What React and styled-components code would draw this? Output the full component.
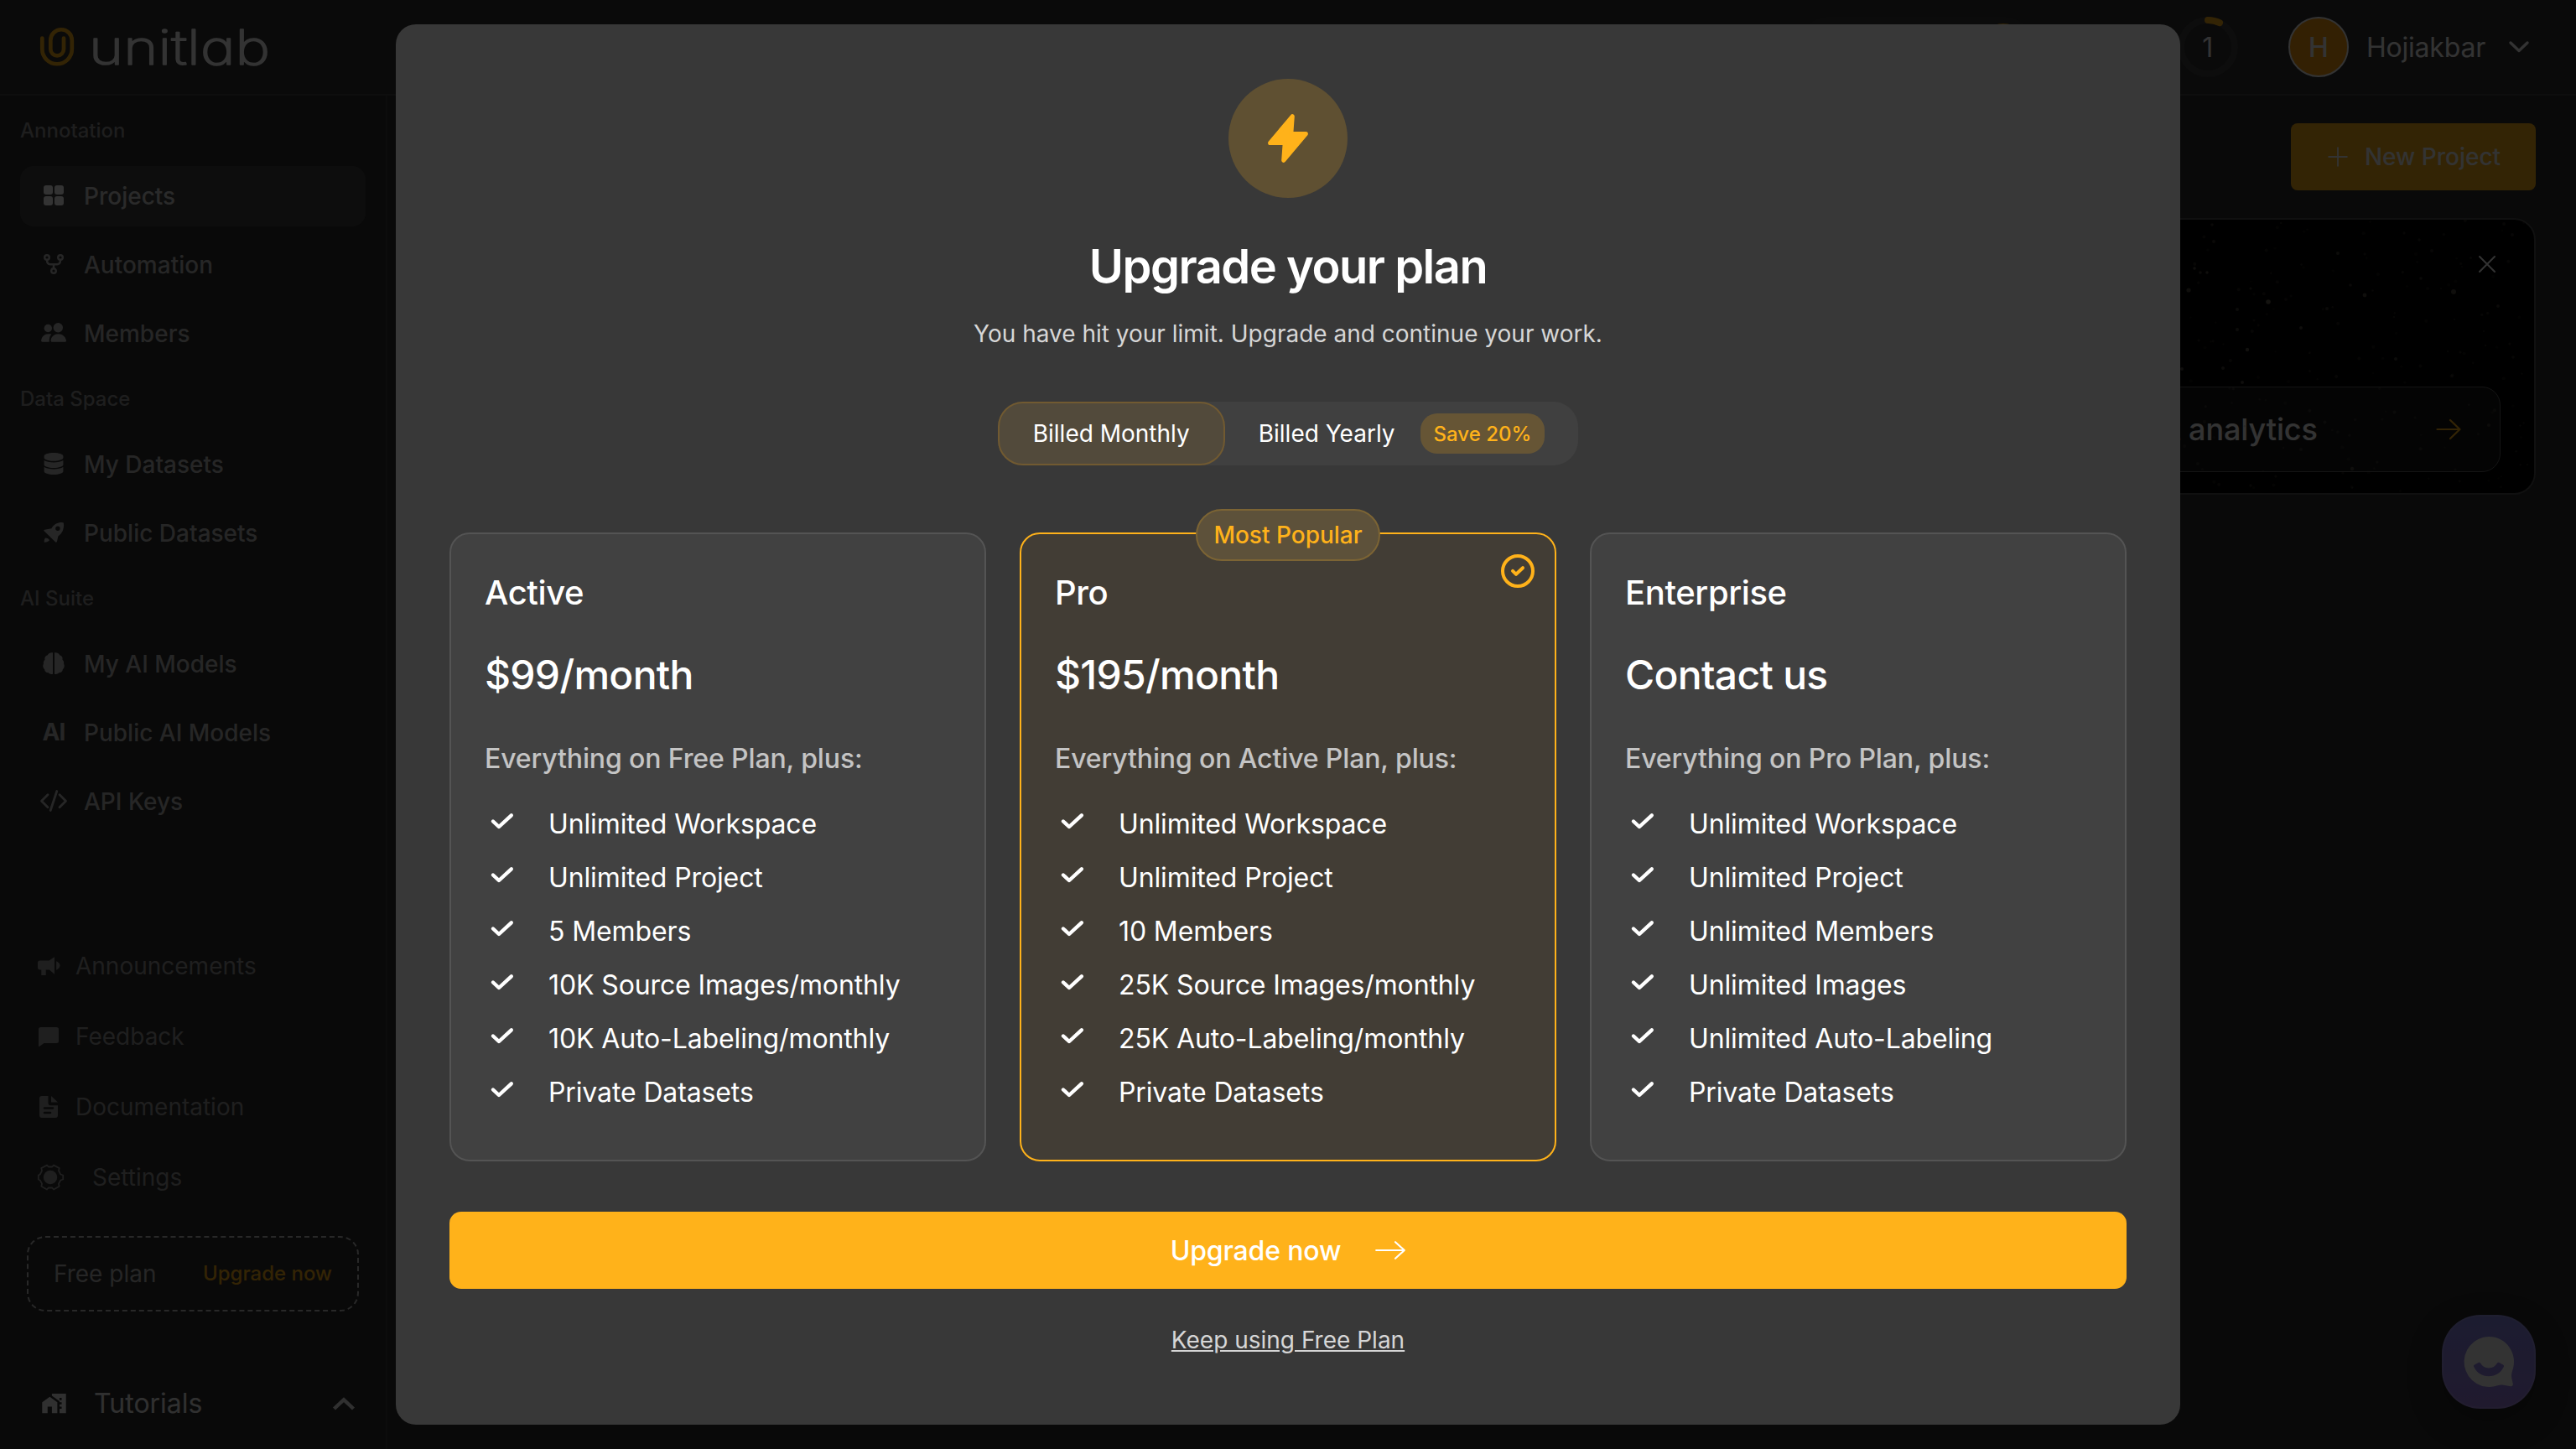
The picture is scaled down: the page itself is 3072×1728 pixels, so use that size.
import styled, { createGlobalStyle, css } from 'styled-components'
import { FaDatabase } from 'react-icons/fa'
import { MdHomeWork } from 'react-icons/md'

const GlobalStyle = createGlobalStyle`
    * {
        box-sizing: border-box;
    }

    body {
        margin: 0;
        background: #2d2d2d;
        font-family: 'Inter', sans-serif;
        overflow: hidden;
    }

    h2, h3, p, ul {
        margin: 0;
        padding: 0;
        font-weight: inherit;
    }

    ul {
        list-style: none;
    }

    button {
        font-family: inherit;
        border: none;
        padding: 0;
    }

    svg {
        display: block;
        flex-shrink: 0;
        overflow: visible;
    }
`

const Page = styled.div`
    width: 3072px;
    height: 1728px;
    display: flex;
    flex-direction: column;
    background: #2d2d2d;
    color: #fff;
`

/* ---------- header ---------- */

const Header = styled.header`
    height: 114px;
    flex-shrink: 0;
    display: flex;
    align-items: center;
    justify-content: space-between;
    padding: 0 56px 0 48px;
    background: #323232;
    border-bottom: 2px solid #464646;
`

const HeaderRight = styled.div`
    display: flex;
    align-items: center;
`

const UsagePill = styled.div`
    width: 280px;
    height: 72px;
    padding: 8px;
    display: flex;
    justify-content: flex-end;
    border-radius: 36px;
    background: #3a3a3a;
    margin-right: 172px;
`

const PillDot = styled.span`
    width: 56px;
    height: 56px;
    border-radius: 50%;
    background: #ffb21a;
`

const Ring = styled.div`
    width: 72px;
    height: 72px;
    display: grid;
    place-items: center;
    font-size: 32px;
    margin-right: 60px;

    > * {
        grid-area: 1 / 1;
    }
`

const Avatar = styled.div`
    width: 72px;
    height: 72px;
    display: flex;
    align-items: center;
    justify-content: center;
    border: 2px solid #fff;
    border-radius: 50%;
    background: #ffa00f;
    font-size: 32px;
    font-weight: 500;
`

const UserName = styled.span`
    font-size: 32px;
    letter-spacing: -0.2px;
    margin: 0 28px 0 21px;
`

/* ---------- sidebar ---------- */

const Body = styled.div`
    flex: 1;
    min-height: 0;
    display: flex;
`

const Sidebar = styled.aside`
    width: 462px;
    flex-shrink: 0;
    display: flex;
    flex-direction: column;
    padding-top: 27px;
    border-right: 2px solid #3c3c3c;
`

const Group = styled.div`
    padding: 0 24px;
    margin-bottom: 27px;
`

const GroupLabel = styled.p`
    height: 30px;
    line-height: 30px;
    margin-bottom: 27px;
    font-size: 24px;
    font-weight: 500;
    color: #969696;
`

const GroupItems = styled.div`
    display: flex;
    flex-direction: column;
    gap: 10px;
`

const NavItem = styled.a`
    height: 72px;
    display: flex;
    align-items: center;
    gap: 20px;
    padding-left: 24px;
    border-radius: 16px;
    font-size: 28px;
    font-weight: 500;
    color: ${(props) => (props.$active ? '#d2d2d2' : '#bebebe')};
    background: ${(props) => (props.$active ? '#434343' : 'transparent')};

    svg {
        color: ${(props) => (props.$active ? '#fff' : '#bebebe')};
    }
`

const NavIcon = styled.span`
    width: 32px;
    height: 32px;
    display: flex;
    align-items: center;
    justify-content: center;
    margin-bottom: 2px;
`

const AiMark = styled.span`
    font-size: 28px;
    font-weight: 700;
    letter-spacing: -1px;
`

const FooterNav = styled.div`
    margin-top: auto;
    padding-left: 44px;
`

const FooterItem = styled.a`
    height: 84px;
    display: flex;
    align-items: center;
    gap: ${(props) => (props.$wide ? '34px' : '18px')};
    font-size: 28px;
    color: #9b9b9b;
`

const FooterIcon = styled.span`
    width: ${(props) => (props.$wide ? '32px' : '28px')};
    display: flex;
    justify-content: center;
`

const PlanBox = styled.div`
    height: 90px;
    margin: 28px 32px 55px;
    display: flex;
    align-items: center;
    justify-content: space-between;
    padding: 0 30px;
    border: 2px dashed #c8c8c8;
    border-radius: 22px;
    font-size: 28px;
    color: #bebebe;

    b {
        font-size: 24px;
        font-weight: 500;
        color: #ffb21a;
        padding-bottom: 2px;
    }
`

const Tutorials = styled.div`
    height: 109px;
    flex-shrink: 0;
    display: flex;
    align-items: center;
    padding: 0 37px 0 49px;
    font-size: 32px;
    color: #f0f0f0;

    span {
        flex: 1;
        margin-left: 32px;
    }
`

/* ---------- main area ---------- */

const Main = styled.main`
    flex: 1;
    display: flex;
    flex-direction: column;
    align-items: flex-end;
    padding: 33px 48px 48px 32px;
`

const NewProject = styled.button`
    width: 292px;
    height: 80px;
    flex-shrink: 0;
    display: flex;
    align-items: center;
    justify-content: center;
    gap: 20px;
    padding-left: 2px;
    border-radius: 8px;
    background: #ffb21a;
    color: #fff;
    font-size: 28px;
    font-weight: 500;
`

const Banner = styled.section`
    position: relative;
    width: 100%;
    height: 330px;
    margin-top: 33px;
    display: flex;
    flex-direction: column;
    align-items: flex-end;
    justify-content: space-between;
    padding: 43px 40px 25px;
    border: 2px solid #505050;
    border-radius: 26px;
    background: #000;
    overflow: hidden;
`

const Stars = styled.svg`
    position: absolute;
    top: 0;
    right: 0;
`

const BannerCard = styled.div`
    width: 640px;
    height: 102px;
    display: flex;
    align-items: center;
    justify-content: space-between;
    padding: 0 46px 0 137px;
    border: 1px solid #646464;
    border-radius: 22px;
    background: rgba(255, 255, 255, 0.09);
    font-size: 36px;
    font-weight: 500;
    letter-spacing: -0.1px;
`

const CloseIcon = styled.svg`
    margin-right: 6px;
`

const Chat = styled.button`
    width: 112px;
    height: 112px;
    margin-top: auto;
    border-radius: 46px;
    border: 2px solid rgba(255, 255, 255, 0.12);
    background: linear-gradient(#8c8cf0, #a082e6) border-box;
    box-shadow: 0 14px 40px rgba(0, 0, 0, 0.25);
`

/* ---------- modal ---------- */

const Backdrop = styled.div`
    position: fixed;
    inset: 0;
    display: flex;
    align-items: center;
    justify-content: center;
    background: rgba(0, 0, 0, 0.8);
`

const Modal = styled.div`
    width: 2128px;
    height: 1670px;
    display: flex;
    flex-direction: column;
    align-items: center;
    padding: 65px 64px;
    border-radius: 24px;
    background: #383838;
    color: #fff;
`

const BoltCircle = styled.div`
    width: 142px;
    height: 142px;
    flex-shrink: 0;
    display: flex;
    align-items: center;
    justify-content: center;
    border-radius: 50%;
    background: #5f5032;
`

const Title = styled.h2`
    margin-top: 50px;
    font-size: 56px;
    line-height: 64px;
    font-weight: 600;
    letter-spacing: -1.5px;
`

const Subtitle = styled.p`
    margin-top: 28px;
    font-size: 28px;
    line-height: 40px;
    color: #d6d6d6;
`

const Toggle = styled.div`
    margin-top: 61px;
    height: 76px;
    flex-shrink: 0;
    display: flex;
    border-radius: 30px;
    background: #404040;
`

const ToggleOption = styled.button`
    height: 76px;
    display: flex;
    align-items: center;
    gap: 30px;
    padding: 0 40px;
    border-radius: 30px;
    background: transparent;
    color: #fff;
    font-size: 28px;

    ${(props) =>
        props.$active &&
        css`
            border: 2px solid #715a31;
            background: #524a3b;
        `}
`

const SaveTag = styled.span`
    height: 48px;
    display: flex;
    align-items: center;
    padding: 0 16px;
    border-radius: 20px;
    background: #665535;
    color: #ffb21a;
    font-size: 24px;
    font-weight: 500;
`

const Plans = styled.div`
    width: 100%;
    margin-top: 80px;
    display: grid;
    grid-template-columns: repeat(3, 640px);
    gap: 40px;
`

const PlanCard = styled.div`
    position: relative;
    height: 750px;
    padding: 46px 40px 0;
    border: 2px solid ${(props) => (props.$highlight ? '#ffb21a' : '#545454')};
    border-radius: 24px;
    background: ${(props) => (props.$highlight ? '#423d35' : '#414141')};
`

const PopularTag = styled.div`
    position: absolute;
    top: -30px;
    left: 50%;
    transform: translateX(-50%);
    width: 220px;
    height: 62px;
    display: flex;
    align-items: center;
    justify-content: center;
    border: 2px solid #7c6434;
    border-radius: 31px;
    background: #5d513a;
    color: #ffb21a;
    font-size: 28px;
    font-weight: 500;
    white-space: nowrap;
`

const SelectedIcon = styled.svg`
    position: absolute;
    top: 24px;
    right: 24px;
`

const PlanName = styled.h3`
    font-size: 40px;
    line-height: 48px;
    font-weight: 500;
    letter-spacing: -0.4px;
`

const Price = styled.p`
    margin-top: 45px;
    font-size: 48px;
    line-height: 58px;
    font-weight: 500;
    letter-spacing: -0.7px;
`

const Includes = styled.p`
    margin-top: 51px;
    font-size: 32px;
    line-height: 40px;
    font-weight: 500;
    letter-spacing: -0.13px;
    color: #c4c4c4;
`

const Features = styled.ul`
    margin-top: 25px;
`

const Feature = styled.li`
    height: 64px;
    display: flex;
    align-items: center;
    gap: 41px;
    padding-left: 7px;
    font-size: 32px;
    letter-spacing: -0.12px;

    svg {
        margin-bottom: 6px;
    }
`

const UpgradeButton = styled.button`
    width: 100%;
    height: 92px;
    flex-shrink: 0;
    margin-top: 60px;
    display: flex;
    align-items: center;
    justify-content: center;
    gap: 41px;
    border-radius: 14px;
    background: #ffb21a;
    color: #fff;
    font-size: 32px;
    font-weight: 500;
    letter-spacing: -0.15px;
`

const KeepLink = styled.a`
    margin-top: 41px;
    font-size: 28px;
    line-height: 40px;
    color: #d6d6d6;
    text-decoration: underline;
`

/* ---------- icons ---------- */

const Logo = () => (
    <svg width='272' height='56' viewBox='0 0 272 56' fill='none'>
        <path
            d='M2.3 17.5V30.5a17.75 17.75 0 0 0 35.5 0V20a12.75 12.75 0 0 0-25.5 0V30.5a7.85 7.85 0 0 0 15.7 0V17.5'
            stroke='#ffb21a'
            strokeWidth='4.7'
            strokeLinecap='round'
        />
        <text
            x='58'
            y='49'
            fill='#fff'
            stroke='#fff'
            strokeWidth='1.600'
            strokeLinejoin='round'
            fontSize='57'
            fontWeight='200'
            textLength='216'
            lengthAdjust='spacingAndGlyphs'
            fontFamily='Inter, sans-serif'
            style={{ fontFeatureSettings: '"cv11"' }}
        >
            unitlab
        </text>
    </svg>
)

const ProjectsIcon = () => (
    <svg width='24' height='24' viewBox='0 0 24 24' fill='currentColor'>
        <rect width='11' height='11' rx='3' />
        <rect x='13' width='11' height='11' rx='3' />
        <rect y='13' width='11' height='11' rx='3' />
        <rect x='13' y='13' width='11' height='11' rx='3' />
    </svg>
)

const AutomationIcon = () => (
    <svg
        width='24'
        height='24'
        viewBox='0 0 24 24'
        fill='none'
        stroke='currentColor'
        strokeWidth='2.4'
    >
        <circle cx='4' cy='4' r='2.8' />
        <circle cx='20' cy='4' r='2.8' />
        <circle cx='12' cy='20' r='2.8' />
        <path d='M4 7c0 4 1.500 5.200 4 5.200h8c2.500 0 4-1.200 4-5.200M12 12v5.500' />
    </svg>
)

const MembersIcon = () => (
    <svg width='30' height='24' viewBox='0 0 30 24' fill='currentColor'>
        <circle cx='8.300' cy='6.500' r='4.700' />
        <circle cx='20.300' cy='5.700' r='5.700' />
        <path d='M12.500 13.600C10.500 15.500 9.700 18 9.700 22.800H1.500C.5 22.800 0 22 .2 20.800.8 16.500 4 13.300 8.500 13.300c1.500 0 2.800 0 4 .3z' />
        <path d='M20.500 13.300c5 0 8.600 3.300 9.400 7.400.3 1.300-.4 2.100-1.500 2.100H13.100c-1.100 0-1.700-.8-1.500-2.100.6-4.100 4-7.400 8.900-7.400z' />
    </svg>
)

const RocketIcon = () => (
    <svg width='24' height='24' viewBox='0 0 24 24' fill='currentColor'>
        <path
            fillRule='evenodd'
            d='M22.900.2C17.500-.4 12.500 2 9.300 7.200L1.200 8.700c-.9.200-1.200.9-.6 1.500l13.600 13.300c.6.6 1.500.3 1.700-.5l1.500-6.600C22.500 13 24.500 7.800 24 1.300c0-.7-.4-1-1.100-1.100zM16.900 4.600a2.700 2.700 0 1 1 0 5.400 2.700 2.700 0 0 1 0-5.400z'
        />
        <path d='M2 18.600c1.800-.2 4.200 1 5 2.600-1.400 1.700-3.300 2.400-5.400 2.600-.7 0-.9-.3-.9-.9 0-1.500.3-3 1.300-4.300z' />
    </svg>
)

const BrainIcon = () => (
    <svg width='26' height='26' viewBox='0 0 26 26' fill='currentColor'>
        <path d='M12 .3v25.500c-2.200.5-4.300 0-5.200-1.500-2.800.2-4.600-1.600-4.500-3.700C.3 19-.4 16 .9 13.600.6 11.500 1.200 9.800 2.500 8.800 1.900 6 3.200 4 5.800 3.300 6.800 1.200 9.300-.2 12 .3z' />
        <path d='M14 .3v25.500c2.200.5 4.300 0 5.200-1.500 2.800.2 4.600-1.600 4.500-3.700 2-1.600 2.700-4.600 1.400-7 .3-2.100-.3-3.800-1.600-4.800.6-2.800-.7-4.800-3.300-5.500C19.200 1.200 16.700-.2 14 .3z' />
    </svg>
)

const CodeIcon = () => (
    <svg
        width='32'
        height='26'
        viewBox='0 0 32 26'
        fill='none'
        stroke='currentColor'
        strokeWidth='2.8'
        strokeLinecap='round'
        strokeLinejoin='round'
    >
        <path d='M9 5.800 1.500 13.300 9 20.800M23 5.800l7.500 7.500-7.500 7.500M19.800 1.500 12.200 24.500' />
    </svg>
)

const MegaphoneIcon = () => (
    <svg width='27' height='22' viewBox='0 0 27 22' fill='currentColor'>
        <path d='M20 .3v20.400l-6.200-5.200H9.700V22H4.300v-6.500H2.500C1 15.500 0 14.500 0 13V7c0-1.500 1-2.500 2.500-2.500h11z' />
        <path d='M22.200 5.300c2.500 1 4.300 3 4.300 5.200s-1.800 4.300-4.300 5.300z' />
    </svg>
)

const FeedbackIcon = () => (
    <svg width='24' height='23' viewBox='0 0 24 23' fill='currentColor'>
        <path d='M2.500 0h19A2.500 2.500 0 0 1 24 2.500v14a2.500 2.500 0 0 1-2.500 2.500H6.500L1.300 22.700C.6 23.200 0 22.800 0 22V2.500A2.500 2.500 0 0 1 2.500 0z' />
    </svg>
)

const DocIcon = () => (
    <svg width='22' height='26' viewBox='0 0 22 26' fill='none'>
        <path
            fill='currentColor'
            d='M3 0h7.500v8.500c0 1.600 1 2.700 2.700 2.700H22V23a3 3 0 0 1-3 3H3a3 3 0 0 1-3-3V3a3 3 0 0 1 3-3zM14 0l8 7.500h-8z'
        />
        <path
            d='M6 14.500h10M6 20h7'
            stroke='#2d2d2d'
            strokeWidth='2.6'
            strokeLinecap='round'
        />
    </svg>
)

const SettingsIcon = () => (
    <svg width='32' height='32' viewBox='0 0 32 32' fill='none'>
        <circle cx='16' cy='16' r='8.200' fill='currentColor' />
        <path
            stroke='currentColor'
            strokeWidth='1.800'
            strokeLinejoin='round'
            d='M12 1.500 13.800 3.500h4.400L20 1.500l6.700 3.600-.7 3 2.200 4.400 3 1v5l-3 1-2.200 4.200.7 3-6.700 3.800-1.800-2h-4.400l-1.800 2-6.700-3.800.7-3-2.200-4.200-2-1v-5l2-1L6 8.100l-.7-3z'
        />
    </svg>
)

const ChatIcon = () => (
    <svg
        width='108'
        height='108'
        viewBox='2 2 108 108'
        fill='#fff'
        fillRule='evenodd'
    >
        <path d='M56 26a30 30 0 0 1 28.300 40c-1.300 3.800-1.500 6.500-1 9.500l1.500 6.800c.4 1.800-1 3.200-2.800 2.900l-8.500-1.500c-2.500-.5-4.500-.2-7 .6A30 30 0 1 1 56 26zM39 59.600c-1 .6-1.300 1.400-.8 2.400C41.500 69 48 73.300 56 73.300S70.500 69 73.800 62c.5-1 .2-1.800-.8-2.400l-4.600-2.600c-.9-.5-1.700-.3-2.300.6-2.300 3.800-5.700 6-10.100 6s-7.800-2.200-10.100-6c-.6-.9-1.400-1.100-2.300-.6z' />
    </svg>
)

const CheckIcon = () => (
    <svg
        width='28'
        height='20'
        viewBox='0 0 28 20'
        fill='none'
        stroke='currentColor'
        strokeWidth='4.4'
        strokeLinecap='round'
        strokeLinejoin='round'
    >
        <path d='M3 10.500 10 17 24.800 3.300' />
    </svg>
)

/* [x, y, radius, opacity] inside the right part of the banner */
const brightStars = [
    [28, 84, 2.6, 0.6], [123, 98, 2.8, 0.8], [86, 107, 2, 0.5],
    [162, 129, 2, 0.6], [238, 90, 2.4, 0.6], [344, 86, 3, 0.6],
    [98, 155, 2.2, 0.7], [20, 178, 2, 0.6], [69, 177, 2, 0.5],
    [92, 194, 2, 0.6], [275, 166, 2, 0.5], [193, 106, 2, 0.4],
    [206, 40, 2, 0.5], [58, 26, 2, 0.4], [56, 6, 1.8, 0.4],
    [35, 58, 1.8, 0.6], [42, 63, 1.8, 0.5], [50, 63, 1.8, 0.6],
    [397, 103, 2, 0.4], [318, 37, 2, 0.3], [303, 24, 1.8, 0.3],
    [305, 70, 1.8, 0.4], [414, 18, 2, 0.3], [223, 297, 2.2, 0.5],
    [386, 245, 2, 0.4], [86, 131, 2, 0.5], [102, 82, 1.6, 0.4],
    [221, 78, 1.8, 0.4], [352, 158, 1.6, 0.3], [415, 164, 1.8, 0.3],
    [162, 274, 2, 0.3], [102, 317, 1.8, 0.3],
]

const faintStars = Array.from({ length: 170 }, (_, i) => [
    (i * 157.3 + ((i * i * 31) % 97)) % 440,
    (i * 89.7 + ((i * i * 17) % 61)) % 326,
    1.2 + (i % 3) * 0.4,
    0.14 + (i % 4) * 0.05,
])

/* ---------- data ---------- */

const groups = [
    {
        label: 'Annotation',
        items: [
            ['Projects', <ProjectsIcon />, true],
            ['Automation', <AutomationIcon />],
            ['Members', <MembersIcon />],
        ],
    },
    {
        label: 'Data Space',
        items: [
            ['My Datasets', <FaDatabase size={26} />],
            ['Public Datasets', <RocketIcon />],
        ],
    },
    {
        label: 'AI Suite',
        items: [
            ['My AI Models', <BrainIcon />],
            ['Public AI Models', <AiMark>AI</AiMark>],
            ['API Keys', <CodeIcon />],
        ],
    },
]

const footerItems = [
    ['Announcements', <MegaphoneIcon />],
    ['Feedback', <FeedbackIcon />],
    ['Documentation', <DocIcon />],
    ['Settings', <SettingsIcon />, true],
]

const plans = [
    {
        name: 'Active',
        price: '$99/month',
        includes: 'Everything on Free Plan, plus:',
        features: [
            'Unlimited Workspace',
            'Unlimited Project',
            '5 Members',
            '10K Source Images/monthly',
            '10K Auto-Labeling/monthly',
            'Private Datasets',
        ],
    },
    {
        name: 'Pro',
        price: '$195/month',
        includes: 'Everything on Active Plan, plus:',
        highlight: true,
        features: [
            'Unlimited Workspace',
            'Unlimited Project',
            '10 Members',
            '25K Source Images/monthly',
            '25K Auto-Labeling/monthly',
            'Private Datasets',
        ],
    },
    {
        name: 'Enterprise',
        price: 'Contact us',
        includes: 'Everything on Pro Plan, plus:',
        features: [
            'Unlimited Workspace',
            'Unlimited Project',
            'Unlimited Members',
            'Unlimited Images',
            'Unlimited Auto-Labeling',
            'Private Datasets',
        ],
    },
]

const Plan = ({ name, price, includes, features, highlight }) => {
    return (
        <PlanCard $highlight={highlight}>
            {highlight && <PopularTag>Most Popular</PopularTag>}
            {highlight && (
                <SelectedIcon
                    width='40'
                    height='40'
                    viewBox='0 0 40 40'
                    fill='none'
                    stroke='#ffb21a'
                    strokeWidth='4'
                    strokeLinecap='round'
                    strokeLinejoin='round'
                >
                    <circle cx='20' cy='20' r='18' />
                    <path d='M14 19.800 18 23.800 26 16.200' />
                </SelectedIcon>
            )}
            <PlanName>{name}</PlanName>
            <Price>{price}</Price>
            <Includes>{includes}</Includes>
            <Features>
                {features.map((feature) => (
                    <Feature key={feature}>
                        <CheckIcon />
                        {feature}
                    </Feature>
                ))}
            </Features>
        </PlanCard>
    )
}

const UpgradeModal = () => {
    return (
        <Backdrop>
            <Modal>
                <BoltCircle>
                    <svg width='48' height='58' viewBox='0 0 48 58'>
                        <path
                            d='M29.200 2.800 27.700 23.500H45.300L18.800 55.200 20.300 34.500H2.700z'
                            fill='#ffb21a'
                            stroke='#ffb21a'
                            strokeWidth='5.200'
                            strokeLinejoin='round'
                        />
                    </svg>
                </BoltCircle>
                <Title>Upgrade your plan</Title>
                <Subtitle>
                    You have hit your limit. Upgrade and continue your work.
                </Subtitle>
                <Toggle>
                    <ToggleOption $active>Billed Monthly</ToggleOption>
                    <ToggleOption>
                        Billed Yearly
                        <SaveTag>Save 20%</SaveTag>
                    </ToggleOption>
                </Toggle>
                <Plans>
                    {plans.map((plan) => (
                        <Plan key={plan.name} {...plan} />
                    ))}
                </Plans>
                <UpgradeButton>
                    Upgrade now
                    <svg
                        width='36'
                        height='22'
                        viewBox='0 0 36 22'
                        fill='none'
                        stroke='#fff'
                        strokeWidth='2.200'
                        strokeLinecap='round'
                        strokeLinejoin='round'
                    >
                        <path d='M1.200 11H34.800M24 1.200 34.800 11 24 20.800' />
                    </svg>
                </UpgradeButton>
                <KeepLink>Keep using Free Plan</KeepLink>
            </Modal>
        </Backdrop>
    )
}

const App = () => {
    return (
        <>
            <GlobalStyle />
            <Page>
                <Header>
                    <Logo />
                    <HeaderRight>
                        <UsagePill>
                            <PillDot />
                        </UsagePill>
                        <Ring>
                            <svg
                                width='72'
                                height='72'
                                viewBox='0 0 72 72'
                                fill='none'
                                strokeWidth='8'
                            >
                                <circle
                                    cx='36'
                                    cy='36'
                                    r='32'
                                    stroke='#414141'
                                />
                                <path
                                    d='M36 4a32 32 0 0 1 14 3.200'
                                    stroke='#ffb21a'
                                    strokeLinecap='round'
                                />
                            </svg>
                            <span>1</span>
                        </Ring>
                        <Avatar>H</Avatar>
                        <UserName>Hojiakbar</UserName>
                        <svg
                            width='24'
                            height='14'
                            viewBox='0 0 24 14'
                            fill='none'
                            stroke='#fff'
                            strokeWidth='3.400'
                            strokeLinecap='round'
                            strokeLinejoin='round'
                        >
                            <path d='M2 2l10 9.500L22 2' />
                        </svg>
                    </HeaderRight>
                </Header>
                <Body>
                    <Sidebar>
                        {groups.map((group) => (
                            <Group key={group.label}>
                                <GroupLabel>{group.label}</GroupLabel>
                                <GroupItems>
                                    {group.items.map(
                                        ([label, icon, active]) => (
                                            <NavItem
                                                key={label}
                                                $active={active}
                                            >
                                                <NavIcon>{icon}</NavIcon>
                                                {label}
                                            </NavItem>
                                        )
                                    )}
                                </GroupItems>
                            </Group>
                        ))}
                        <FooterNav>
                            {footerItems.map(([label, icon, wide]) => (
                                <FooterItem key={label} $wide={wide}>
                                    <FooterIcon $wide={wide}>{icon}</FooterIcon>
                                    {label}
                                </FooterItem>
                            ))}
                        </FooterNav>
                        <PlanBox>
                            Free plan
                            <b>Upgrade now</b>
                        </PlanBox>
                        <Tutorials>
                            <MdHomeWork size={31} />
                            <span>Tutorials</span>
                            <svg
                                width='26'
                                height='16'
                                viewBox='0 0 26 16'
                                fill='none'
                                stroke='#f0f0f0'
                                strokeWidth='4.400'
                            >
                                <path d='M1.500 14 13 3.200 24.500 14' />
                            </svg>
                        </Tutorials>
                    </Sidebar>
                    <Main>
                        <NewProject>
                            <svg
                                width='24'
                                height='24'
                                viewBox='0 0 24 24'
                                stroke='#fff'
                                strokeWidth='1.800'
                            >
                                <path d='M12 .5v23M.5 12h23' />
                            </svg>
                            New Project
                        </NewProject>
                        <Banner>
                            <Stars
                                width='440'
                                height='326'
                                viewBox='0 0 440 326'
                                fill='#7d7565'
                            >
                                {[...brightStars, ...faintStars].map(
                                    ([x, y, r, o], i) => (
                                        <circle
                                            key={i}
                                            cx={x}
                                            cy={y}
                                            r={r}
                                            opacity={o}
                                        />
                                    )
                                )}
                            </Stars>
                            <CloseIcon
                                width='20'
                                height='20'
                                viewBox='0 0 20 20'
                                stroke='#fff'
                                strokeWidth='2'
                                strokeLinecap='round'
                            >
                                <path d='M1 1l18 18M19 1L1 19' />
                            </CloseIcon>
                            <BannerCard>
                                Project analytics
                                <svg
                                    width='30'
                                    height='26'
                                    viewBox='0 0 30 26'
                                    fill='none'
                                    stroke='#ffb21a'
                                    strokeWidth='2.200'
                                    strokeLinecap='round'
                                    strokeLinejoin='round'
                                >
                                    <path d='M1.500 13h27M17 2l11.500 11L17 24' />
                                </svg>
                            </BannerCard>
                        </Banner>
                        <Chat>
                            <ChatIcon />
                        </Chat>
                    </Main>
                </Body>
            </Page>
            <UpgradeModal />
        </>
    )
}

export default App
